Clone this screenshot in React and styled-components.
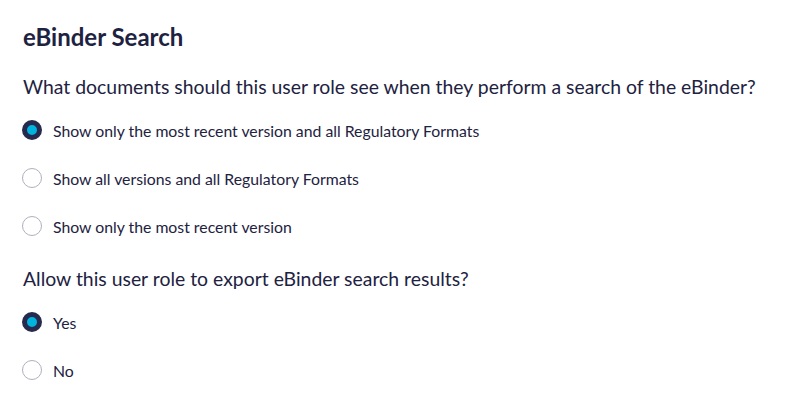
import React, { useState } from "react";
import styled, { createGlobalStyle } from "styled-components";

const Global = createGlobalStyle`
  html, body { margin: 0; padding: 0; background: #fff; }
  body { font-family: Lato, "Noto Sans", sans-serif; color: #1e2241; }
`;

const Page = styled.div`
  padding: 22px 22px 0 22px;
  display: flex;
  flex-direction: column;
`;

const Title = styled.h2`
  margin: 0 0 0 1px;
  font-size: 24px;
  font-weight: 700;
  line-height: 30px;
  color: #1e2241;
`;

const Question = styled.p`
  margin: ${(p) => p.$top}px 0 0 1px;
  font-size: 19.4px;
  line-height: 26px;
  color: #1e2241;
`;

const Options = styled.div`
  display: flex;
  flex-direction: column;
  gap: 24px;
  margin-top: 18px;
`;

const Option = styled.label`
  display: flex;
  align-items: center;
  gap: 11px;
  height: 24px;
  font-size: 15.8px;
  color: #1e2241;
  cursor: pointer;
`;

const Radio = styled.span`
  box-sizing: border-box;
  width: 20px;
  height: 20px;
  border-radius: 50%;
  flex: none;
  background: ${(p) => (p.$checked ? "#00b3e0" : "#fff")};
  border: ${(p) => (p.$checked ? "5px solid #262b4d" : "1px solid #adb0be")};
`;

function Group({ options, value, onChange }) {
  return (
    <Options>
      {options.map((o, i) => (
        <Option key={o} onClick={() => onChange(i)}>
          <Radio $checked={value === i} />
          {o}
        </Option>
      ))}
    </Options>
  );
}

export default function App() {
  const [a, setA] = useState(0);
  const [b, setB] = useState(0);
  return (
    <>
      <Global />
      <Page>
        <Title>eBinder Search</Title>
        <Question $top={22}>
          What documents should this user role see when they perform a search of the eBinder?
        </Question>
        <Group
          value={a}
          onChange={setA}
          options={[
            "Show only the most recent version and all Regulatory Formats",
            "Show all versions and all Regulatory Formats",
            "Show only the most recent version",
          ]}
        />
        <Question $top={28}>Allow this user role to export eBinder search results?</Question>
        <Group value={b} onChange={setB} options={["Yes", "No"]} />
      </Page>
    </>
  );
}
